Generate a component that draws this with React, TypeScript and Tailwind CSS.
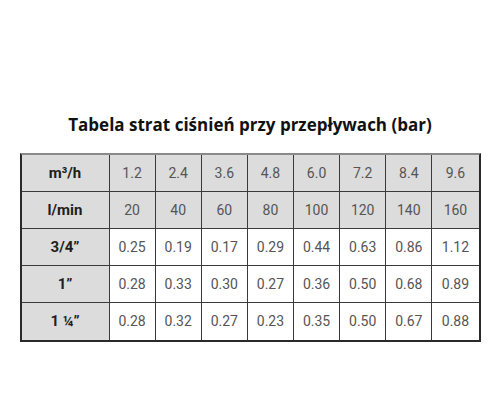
const headers = [
  { label: 'm³/h', values: ['1.2', '2.4', '3.6', '4.8', '6.0', '7.2', '8.4', '9.6'], shaded: true },
  { label: 'l/min', values: ['20', '40', '60', '80', '100', '120', '140', '160'], shaded: true },
  { label: '3/4”', values: ['0.25', '0.19', '0.17', '0.29', '0.44', '0.63', '0.86', '1.12'], shaded: false },
  { label: '1”', values: ['0.28', '0.33', '0.30', '0.27', '0.36', '0.50', '0.68', '0.89'], shaded: false },
  { label: '1 ¼”', values: ['0.28', '0.32', '0.27', '0.23', '0.35', '0.50', '0.67', '0.88'], shaded: false },
]

export default function App() {
  return (
    <div className="w-[500px] h-[419px] bg-white flex flex-col items-center pt-[113px]">
      <h1 className="font-['Open_Sans',sans-serif] font-bold text-[17px] leading-[24px] text-[#111]">
        Tabela strat ciśnień przy przepływach (bar)
      </h1>

      <div className="mt-[16px] w-[461px] border-2 border-[#2a2a2a] border-t-[#8a8a8a] grid grid-cols-[88px_repeat(8,1fr)] font-['Roboto',sans-serif] text-[14px]">
        {headers.map((row, ri) => {
          const last = ri === headers.length - 1
          return [
            <div
              key={row.label}
              className={`h-[37px] flex items-center justify-center bg-[#dcdcdc] font-bold text-[15px] text-[#1e1e1e] border-r border-[#3a3a3a] ${last ? '' : 'border-b'}`}
            >
              {row.label}
            </div>,
            ...row.values.map((v, ci) => (
              <div
                key={row.label + ci}
                className={`h-[37px] flex items-center justify-center text-[#555] border-[#3a3a3a] ${row.shaded ? 'bg-[#dcdcdc]' : 'bg-white'} ${ci < 7 ? 'border-r' : ''} ${last ? '' : 'border-b'}`}
              >
                {v}
              </div>
            )),
          ]
        })}
      </div>
    </div>
  )
}
